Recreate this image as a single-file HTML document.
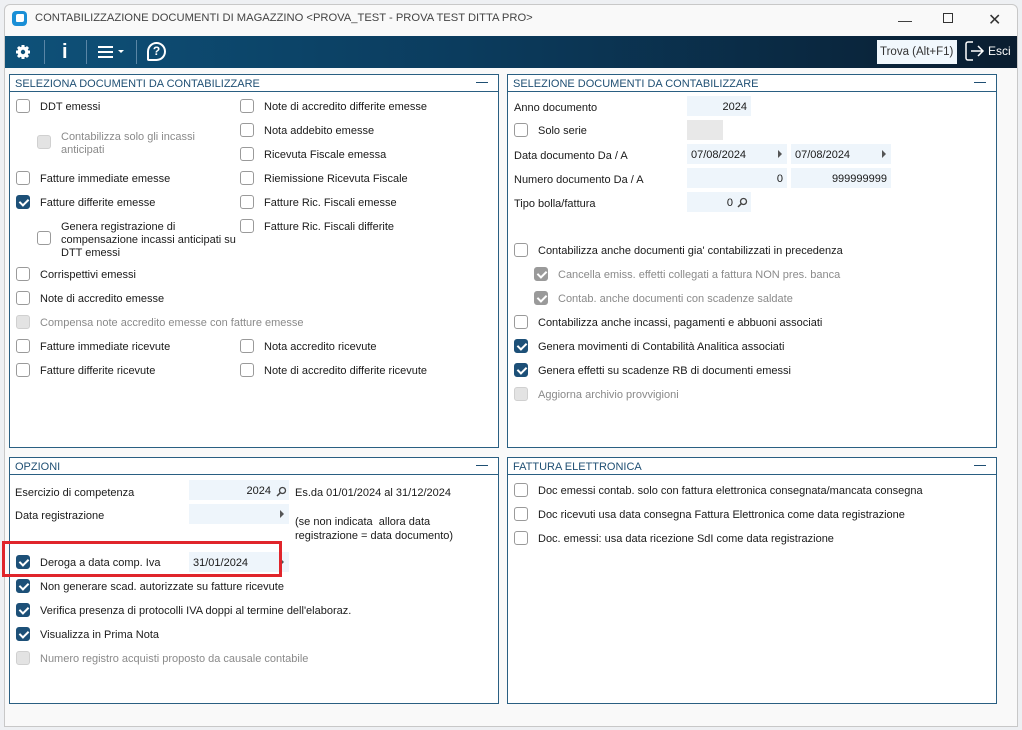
<!DOCTYPE html>
<html><head><meta charset="utf-8"><style>
*{margin:0;padding:0;box-sizing:border-box}
body{width:1022px;height:730px;background:#eef0f3;font-family:"Liberation Sans",Tahoma,sans-serif;font-size:11px;color:#1a1a1a;position:relative;overflow:hidden}
.win{position:absolute;left:4px;top:4px;width:1014px;height:723px;background:#f9f9f9;border:1px solid #c8c8c8;border-radius:6px 6px 0 0}
.title{position:absolute;left:35px;top:12px;font-size:11.2px;color:#444;white-space:nowrap}
.tb{position:absolute;left:5px;top:36px;width:1012px;height:32px;background:linear-gradient(90deg,#0e5179 0%,#0b3c5e 45%,#0a1d30 100%)}
.panel{position:absolute;border:1px solid #2a5f82;background:#fff}
.ph{position:absolute;left:0;top:0;right:0;height:17px;border-bottom:1px solid #2a5f82;color:#1f4f73;font-size:11px;padding:3px 0 0 5px}
.ph:after{content:"";position:absolute;right:10px;top:7px;width:12px;height:1px;background:#1f4f73}
.cb{position:absolute;width:14px;height:14px;border:1px solid #9a9a9a;border-radius:3px;background:#fff}
.cb.c{background:#1d5078;border-color:#1d5078}
.cb.d{background:#e3e3e3;border-color:#d0d0d0}
.cb.cd{background:#9a9a9a;border-color:#9a9a9a}
.cb.c:after,.cb.cd:after{content:"";position:absolute;left:4px;top:1px;width:4px;height:7px;border:solid #fff;border-width:0 2px 2px 0;transform:rotate(45deg)}
.t{position:absolute;white-space:nowrap;padding-top:2px}
.g{color:#8a8a8a}
.f{position:absolute;height:20px;background:#eef5fb;padding:5px 4px 0;white-space:nowrap}
.r{text-align:right}
.ar{position:absolute;right:5px;top:6px;width:0;height:0;border-left:4px solid #555;border-top:4px solid transparent;border-bottom:4px solid transparent}
</style></head><body>
<div class="win"></div>
<div style="position:absolute;left:12px;top:11px;width:15px;height:15px;background:#1a8fd6;border-radius:4px"><div style="position:absolute;left:4px;top:3px;width:8px;height:8px;background:#fff;border-radius:2px 1px 2px 1px"></div></div>
<div class="title">CONTABILIZZAZIONE DOCUMENTI DI MAGAZZINO &lt;PROVA_TEST - PROVA TEST DITTA PRO&gt;</div>
<div class="t" style="left:898px;top:10px;font-size:14px;color:#333">—</div>
<div style="position:absolute;left:943px;top:13px;width:10px;height:10px;border:1px solid #333"></div>
<div class="t" style="left:988px;top:8px;font-size:16px;color:#333">✕</div>
<div class="tb">
 <svg style="position:absolute;left:10px;top:8px" width="16" height="16" viewBox="0 0 16 16"><circle cx="8" cy="8" r="5.5" fill="#fff"/><g stroke="#fff" stroke-width="3"><path d="M8 1v14M1 8h14M3 3l10 10M13 3L3 13"/></g><circle cx="8" cy="8" r="2.2" fill="#0e5179"/></svg>
 <div style="position:absolute;left:39px;top:4px;width:1px;height:24px;background:#5a86a6"></div>
 <div class="t" style="left:57px;top:3px;color:#fff;font-size:20px;font-weight:bold">i</div>
 <div style="position:absolute;left:81px;top:4px;width:1px;height:24px;background:#5a86a6"></div>
 <div style="position:absolute;left:93px;top:10px;width:15px;height:2px;background:#fff;box-shadow:0 5px 0 #fff,0 10px 0 #fff"></div>
 <div style="position:absolute;left:113px;top:14px;border-top:3px solid #fff;border-left:3px solid transparent;border-right:3px solid transparent"></div>
 <div style="position:absolute;left:131px;top:4px;width:1px;height:24px;background:#5a86a6"></div>
 <div style="position:absolute;left:142px;top:6px;width:19px;height:19px;border:2px solid #fff;border-radius:10px 10px 10px 2px;color:#fff;font-size:12px;font-weight:bold;text-align:center;line-height:15px">?</div>
 <div style="position:absolute;left:872px;top:4px;width:80px;height:24px;background:#f1f8fd;color:#333;font-size:11.5px;padding:6px 3px 0">Trova (Alt+F1)</div>
 <svg style="position:absolute;left:960px;top:5px" width="20" height="20" viewBox="0 0 20 20"><path d="M8 1H3a2 2 0 0 0-2 2v14a2 2 0 0 0 2 2h5" fill="none" stroke="#fff" stroke-width="1.5"/><path d="M6 10h12M13 5l5 5-5 5" fill="none" stroke="#fff" stroke-width="1.5"/></svg>
 <div class="t" style="left:983px;top:6px;color:#fff;font-size:12px">Esci</div>
</div>

<div class="panel" style="left:9px;top:74px;width:490px;height:374px"><div class="ph">SELEZIONA DOCUMENTI DA CONTABILIZZARE</div></div>
<div class="cb" style="left:16px;top:99px"></div><div class="t" style="left:40px;top:99px">DDT emessi</div>
<div class="cb d" style="left:37px;top:135px"></div><div class="t g" style="left:61px;top:129px;line-height:13px">Contabilizza solo gli incassi<br>anticipati</div>
<div class="cb" style="left:16px;top:171px"></div><div class="t" style="left:40px;top:171px">Fatture immediate emesse</div>
<div class="cb c" style="left:16px;top:195px"></div><div class="t" style="left:40px;top:195px">Fatture differite emesse</div>
<div class="cb" style="left:37px;top:231px"></div><div class="t" style="left:61px;top:219px;line-height:13px">Genera registrazione di<br>compensazione incassi anticipati su<br>DTT emessi</div>
<div class="cb" style="left:16px;top:267px"></div><div class="t" style="left:40px;top:267px">Corrispettivi emessi</div>
<div class="cb" style="left:16px;top:291px"></div><div class="t" style="left:40px;top:291px">Note di accredito emesse</div>
<div class="cb d" style="left:16px;top:315px"></div><div class="t g" style="left:40px;top:315px">Compensa note accredito emesse con fatture emesse</div>
<div class="cb" style="left:16px;top:339px"></div><div class="t" style="left:40px;top:339px">Fatture immediate ricevute</div>
<div class="cb" style="left:16px;top:363px"></div><div class="t" style="left:40px;top:363px">Fatture differite ricevute</div>
<div class="cb" style="left:240px;top:99px"></div><div class="t" style="left:264px;top:99px">Note di accredito differite emesse</div>
<div class="cb" style="left:240px;top:123px"></div><div class="t" style="left:264px;top:123px">Nota addebito emesse</div>
<div class="cb" style="left:240px;top:147px"></div><div class="t" style="left:264px;top:147px">Ricevuta Fiscale emessa</div>
<div class="cb" style="left:240px;top:171px"></div><div class="t" style="left:264px;top:171px">Riemissione Ricevuta Fiscale</div>
<div class="cb" style="left:240px;top:195px"></div><div class="t" style="left:264px;top:195px">Fatture Ric. Fiscali emesse</div>
<div class="cb" style="left:240px;top:219px"></div><div class="t" style="left:264px;top:219px">Fatture Ric. Fiscali differite</div>
<div class="cb" style="left:240px;top:339px"></div><div class="t" style="left:264px;top:339px">Nota accredito ricevute</div>
<div class="cb" style="left:240px;top:363px"></div><div class="t" style="left:264px;top:363px">Note di accredito differite ricevute</div>

<div class="panel" style="left:507px;top:74px;width:490px;height:374px"><div class="ph">SELEZIONE DOCUMENTI DA CONTABILIZZARE</div></div>
<div class="t" style="left:514px;top:100px">Anno documento</div><div class="f r" style="left:687px;top:96px;width:64px">2024</div>
<div class="cb" style="left:514px;top:123px"></div><div class="t" style="left:538px;top:123px">Solo serie</div><div class="f" style="left:687px;top:120px;width:36px;background:#e8e8e8"></div>
<div class="t" style="left:514px;top:148px">Data documento Da / A</div>
<div class="f" style="left:687px;top:144px;width:100px">07/08/2024<div class="ar"></div></div>
<div class="f" style="left:791px;top:144px;width:100px">07/08/2024<div class="ar"></div></div>
<div class="t" style="left:514px;top:172px">Numero documento Da / A</div>
<div class="f r" style="left:687px;top:168px;width:100px">0</div>
<div class="f r" style="left:791px;top:168px;width:100px">999999999</div>
<div class="t" style="left:514px;top:196px">Tipo bolla/fattura</div>
<div class="f r" style="left:687px;top:192px;width:64px;padding-right:18px">0</div>
<svg style="position:absolute;left:737px;top:197px" width="11" height="11" viewBox="0 0 11 11"><circle cx="6.5" cy="4.5" r="3" fill="none" stroke="#444" stroke-width="1.3"/><path d="M4.5 6.5L1 10" stroke="#444" stroke-width="1.5"/></svg>
<div class="cb" style="left:514px;top:243px"></div><div class="t" style="left:538px;top:243px">Contabilizza anche documenti gia' contabilizzati in precedenza</div>
<div class="cb cd" style="left:534px;top:267px"></div><div class="t g" style="left:558px;top:267px">Cancella emiss. effetti collegati a fattura NON pres. banca</div>
<div class="cb cd" style="left:534px;top:291px"></div><div class="t g" style="left:558px;top:291px">Contab. anche documenti con scadenze saldate</div>
<div class="cb" style="left:514px;top:315px"></div><div class="t" style="left:538px;top:315px">Contabilizza anche incassi, pagamenti e abbuoni associati</div>
<div class="cb c" style="left:514px;top:339px"></div><div class="t" style="left:538px;top:339px">Genera movimenti di Contabilità Analitica associati</div>
<div class="cb c" style="left:514px;top:363px"></div><div class="t" style="left:538px;top:363px">Genera effetti su scadenze RB di documenti emessi</div>
<div class="cb d" style="left:514px;top:387px"></div><div class="t g" style="left:538px;top:387px">Aggiorna archivio provvigioni</div>

<div class="panel" style="left:9px;top:457px;width:490px;height:247px"><div class="ph">OPZIONI</div></div>
<div class="t" style="left:15px;top:485px">Esercizio di competenza</div>
<div class="f r" style="left:189px;top:480px;width:100px;padding-right:18px">2024</div>
<svg style="position:absolute;left:276px;top:486px" width="11" height="11" viewBox="0 0 11 11"><circle cx="6.5" cy="4.5" r="3" fill="none" stroke="#444" stroke-width="1.3"/><path d="M4.5 6.5L1 10" stroke="#444" stroke-width="1.5"/></svg>
<div class="t" style="left:295px;top:485px">Es.da 01/01/2024 al 31/12/2024</div>
<div class="t" style="left:15px;top:508px">Data registrazione</div>
<div class="f" style="left:189px;top:504px;width:100px"><div class="ar"></div></div>
<div class="t" style="left:295px;top:513px;line-height:14px">(se non indicata &nbsp;allora data<br>registrazione = data documento)</div>
<div class="cb c" style="left:16px;top:555px"></div><div class="t" style="left:40px;top:555px">Deroga a data comp. Iva</div>
<div class="f" style="left:189px;top:552px;width:100px">31/01/2024<div class="ar"></div></div>
<div style="position:absolute;left:2px;top:541px;width:280px;height:36px;border:3px solid #e0252b"></div>
<div class="cb c" style="left:16px;top:579px"></div><div class="t" style="left:40px;top:579px">Non generare scad. autorizzate su fatture ricevute</div>
<div class="cb c" style="left:16px;top:603px"></div><div class="t" style="left:40px;top:603px">Verifica presenza di protocolli IVA doppi al termine dell'elaboraz.</div>
<div class="cb c" style="left:16px;top:627px"></div><div class="t" style="left:40px;top:627px">Visualizza in Prima Nota</div>
<div class="cb d" style="left:16px;top:651px"></div><div class="t g" style="left:40px;top:651px">Numero registro acquisti proposto da causale contabile</div>

<div class="panel" style="left:507px;top:457px;width:490px;height:247px"><div class="ph">FATTURA ELETTRONICA</div></div>
<div class="cb" style="left:514px;top:483px"></div><div class="t" style="left:538px;top:483px">Doc emessi contab. solo con fattura elettronica consegnata/mancata consegna</div>
<div class="cb" style="left:514px;top:507px"></div><div class="t" style="left:538px;top:507px">Doc ricevuti usa data consegna Fattura Elettronica come data registrazione</div>
<div class="cb" style="left:514px;top:531px"></div><div class="t" style="left:538px;top:531px">Doc. emessi: usa data ricezione SdI come data registrazione</div>
</body></html>
